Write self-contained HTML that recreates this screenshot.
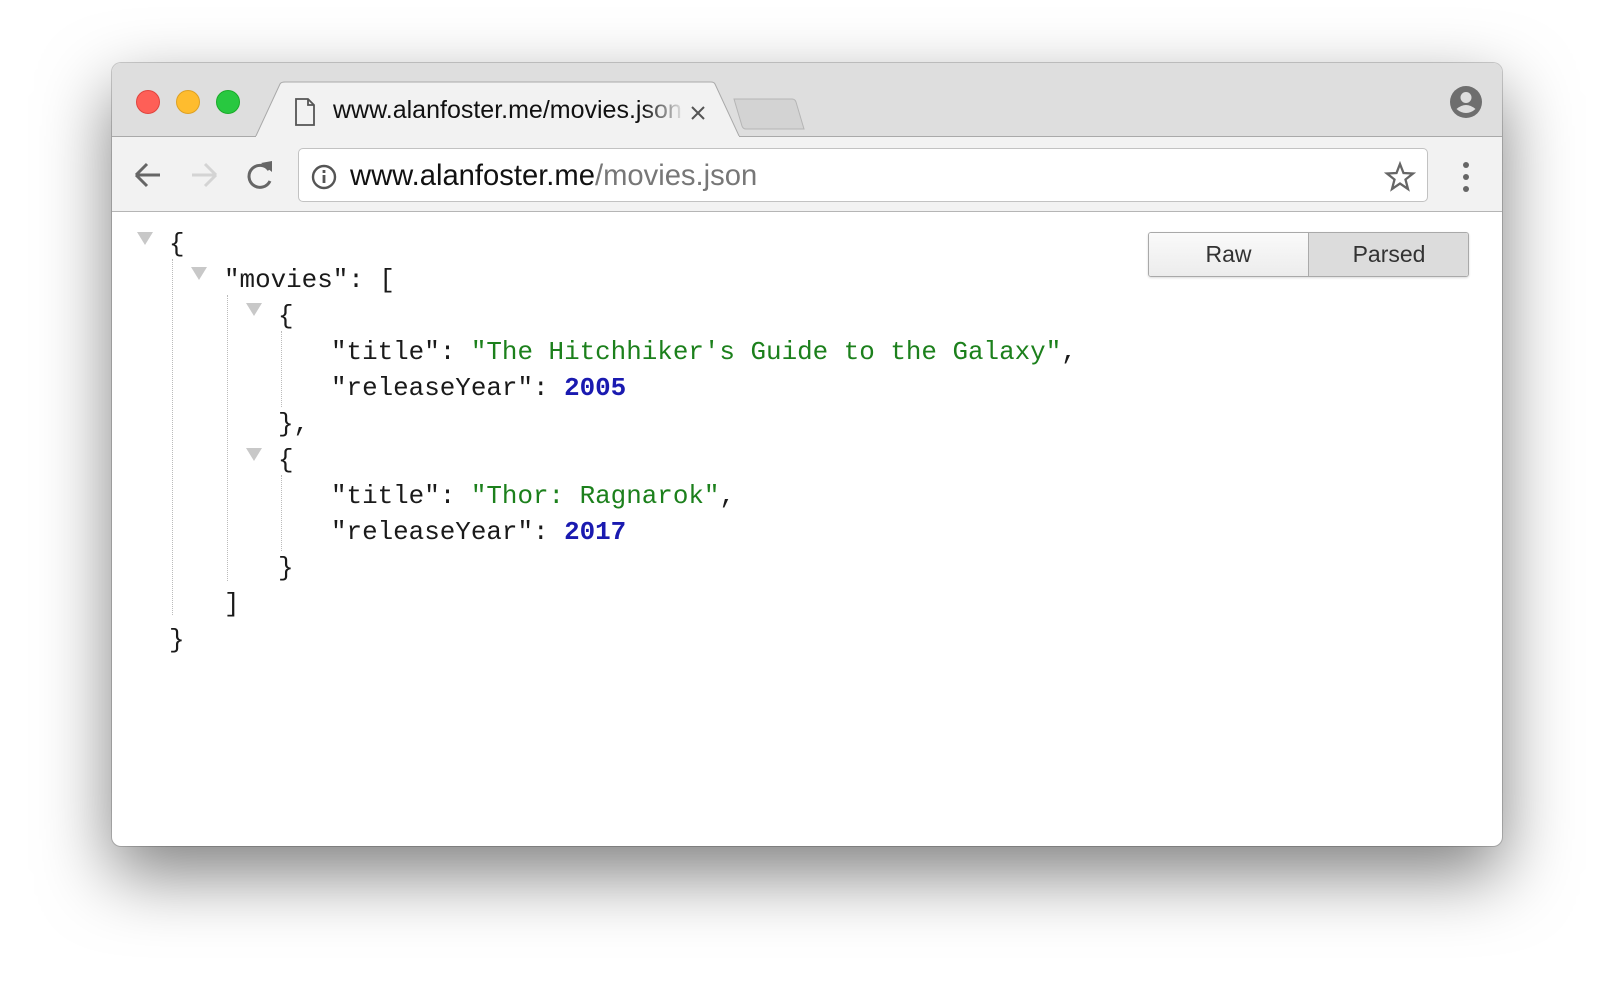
<!DOCTYPE html>
<html><head><meta charset="utf-8"><style>
*{margin:0;padding:0;box-sizing:border-box}
body{width:1614px;height:1006px;background:#fff;position:relative;overflow:hidden;font-family:"Liberation Sans",sans-serif}
.win{position:absolute;left:112px;top:63px;width:1390px;height:783px;border-radius:9px;background:#fff;box-shadow:0 28px 70px rgba(0,0,0,.5),0 0 0 1px rgba(0,0,0,.18);overflow:hidden}
.tabbar{position:absolute;left:0;top:0;width:100%;height:74px;background:#dedede;border-bottom:1px solid #a9a9a9}
.toolbar{position:absolute;left:0;top:74px;width:100%;height:75px;background:#f2f2f2;border-bottom:1px solid #b5b5b5}
.dot{position:absolute;top:27px;width:24px;height:24px;border-radius:50%}
.a{position:absolute}
.l{position:absolute;font-family:"Liberation Mono",monospace;font-size:25.9px;color:#1a1a1a;white-space:pre;line-height:36px}
.s{color:#1c801c}.n{color:#1a1ab0;font-weight:bold}
.tri{position:absolute;width:0;height:0;border-left:8px solid transparent;border-right:8px solid transparent;border-top:13px solid #c8c8c8}
.vl{position:absolute;border-left:1px dotted #bbb;width:0}
</style></head><body>
<div class="win">
  <div class="tabbar"></div>
  <div class="dot" style="left:24px;background:#fe5f57;border:1px solid #e0443e"></div>
  <div class="dot" style="left:64px;background:#febc2e;border:1px solid #dea123"></div>
  <div class="dot" style="left:104px;background:#28c840;border:1px solid #1aab29"></div>
  <svg class="a" style="left:0;top:0" width="720" height="76">
    <path d="M622 36 L680 36 Q683 36 684 39 L692 66 L634 66 Q631 66 630 63 Z" fill="#d3d3d3" stroke="#b5b5b5" stroke-width="1"/>
    <path d="M143 75 L168 21 Q169 19 173 19 L599 19 Q602 19 603 21 L628 75 Z" fill="#f2f2f2" stroke="#a9a9a9" stroke-width="1"/>
    <rect x="144" y="73" width="483" height="4" fill="#f2f2f2"/>
    <path d="M184 36 L196 36 L202 42 L202 62 L184 62 Z M196 36 L196 42 L202 42" fill="none" stroke="#555" stroke-width="1.8"/>
    <path d="M580 44 L592 56 M592 44 L580 56" stroke="#555" stroke-width="2"/>
  </svg>
  <div class="a" style="left:221px;top:33px;font-size:25px;white-space:nowrap;width:352px;overflow:hidden;color:#111;-webkit-mask-image:linear-gradient(to right,#000 88%,transparent);mask-image:linear-gradient(to right,#000 88%,transparent)">www.alanfoster.me/movies.json</div>
  <svg class="a" style="left:1337px;top:22px" width="34" height="34"><circle cx="17" cy="17" r="16" fill="#6e6e6e"/><circle cx="17" cy="12.5" r="5.5" fill="#dedede"/><path d="M7.5 24 Q17 16 26.5 24 Q22 28 17 28 Q12 28 7.5 24Z" fill="#dedede"/></svg>
  <div class="toolbar"></div>
  <svg class="a" style="left:0;top:74px" width="190" height="75">
    <path d="M24 38 L48 38 M24 38 L35 27 M24 38 L35 49" stroke="#666" stroke-width="3" fill="none"/>
    <path d="M104 38 L80 38 M104 38 L93 27 M104 38 L93 49" stroke="#d4d4d4" stroke-width="3" fill="none"/>
    <path d="M157 33 A11 11 0 1 0 158 44" stroke="#666" stroke-width="3" fill="none"/>
    <path d="M149 26 L160 24 L160 35 Z" fill="#666"/>
  </svg>
  <div class="a" style="left:186px;top:85px;width:1130px;height:54px;background:#fff;border:1px solid #c2c2c2;border-radius:5px"></div>
  <svg class="a" style="left:198px;top:100px" width="30" height="30"><circle cx="14" cy="14" r="11" fill="none" stroke="#555" stroke-width="2.4"/><rect x="12.6" y="12" width="2.8" height="8" fill="#555"/><rect x="12.6" y="7" width="2.8" height="3" fill="#555"/></svg>
  <div class="a" style="left:238px;top:97px;font-size:29.2px;color:#111;white-space:nowrap">www.alanfoster.me<span style="color:#777">/movies.json</span></div>
  <svg class="a" style="left:1272px;top:98px" width="32" height="32"><path d="M16 3 L19.5 12 L29 12.5 L21.5 18.5 L24 28 L16 22.5 L8 28 L10.5 18.5 L3 12.5 L12.5 12 Z" fill="none" stroke="#666" stroke-width="2.3"/></svg>
  <svg class="a" style="left:1346px;top:96px" width="16" height="36"><circle cx="8" cy="6" r="3" fill="#666"/><circle cx="8" cy="18" r="3" fill="#666"/><circle cx="8" cy="30" r="3" fill="#666"/></svg>

  <div class="a" style="left:1036px;top:169px;width:321px;height:45px;border:1px solid #a9a9a9;border-radius:3px;overflow:hidden;box-shadow:0 1px 2px rgba(0,0,0,.15)">
    <div class="a" style="left:0;top:0;width:160px;height:43px;background:linear-gradient(#fafafa,#ececec);border-right:1px solid #aaa;font-size:23px;color:#333;text-align:center;line-height:43px">Raw</div>
    <div class="a" style="left:160px;top:0;width:160px;height:43px;background:#dcdcdc;font-size:23px;color:#333;text-align:center;line-height:43px">Parsed</div>
  </div>

  <div class="tri" style="left:25px;top:169px"></div>
  <div class="tri" style="left:79px;top:204px"></div>
  <div class="tri" style="left:134px;top:240px"></div>
  <div class="tri" style="left:134px;top:385px"></div>
  <div class="vl" style="left:60px;top:196px;height:356px"></div>
  <div class="vl" style="left:115px;top:232px;height:286px"></div>
  <div class="vl" style="left:169px;top:268px;height:76px"></div>
  <div class="vl" style="left:169px;top:412px;height:76px"></div>

  <div class="l" style="left:57px;top:163px">{</div>
  <div class="l" style="left:112px;top:199px">"movies": [</div>
  <div class="l" style="left:166px;top:235px">{</div>
  <div class="l" style="left:219px;top:271px">"title": <span class="s">"The Hitchhiker's Guide to the Galaxy"</span>,</div>
  <div class="l" style="left:219px;top:307px">"releaseYear": <span class="n">2005</span></div>
  <div class="l" style="left:166px;top:343px">},</div>
  <div class="l" style="left:166px;top:379px">{</div>
  <div class="l" style="left:219px;top:415px">"title": <span class="s">"Thor: Ragnarok"</span>,</div>
  <div class="l" style="left:219px;top:451px">"releaseYear": <span class="n">2017</span></div>
  <div class="l" style="left:166px;top:487px">}</div>
  <div class="l" style="left:112px;top:523px">]</div>
  <div class="l" style="left:57px;top:559px">}</div>
</div>
</body></html>
